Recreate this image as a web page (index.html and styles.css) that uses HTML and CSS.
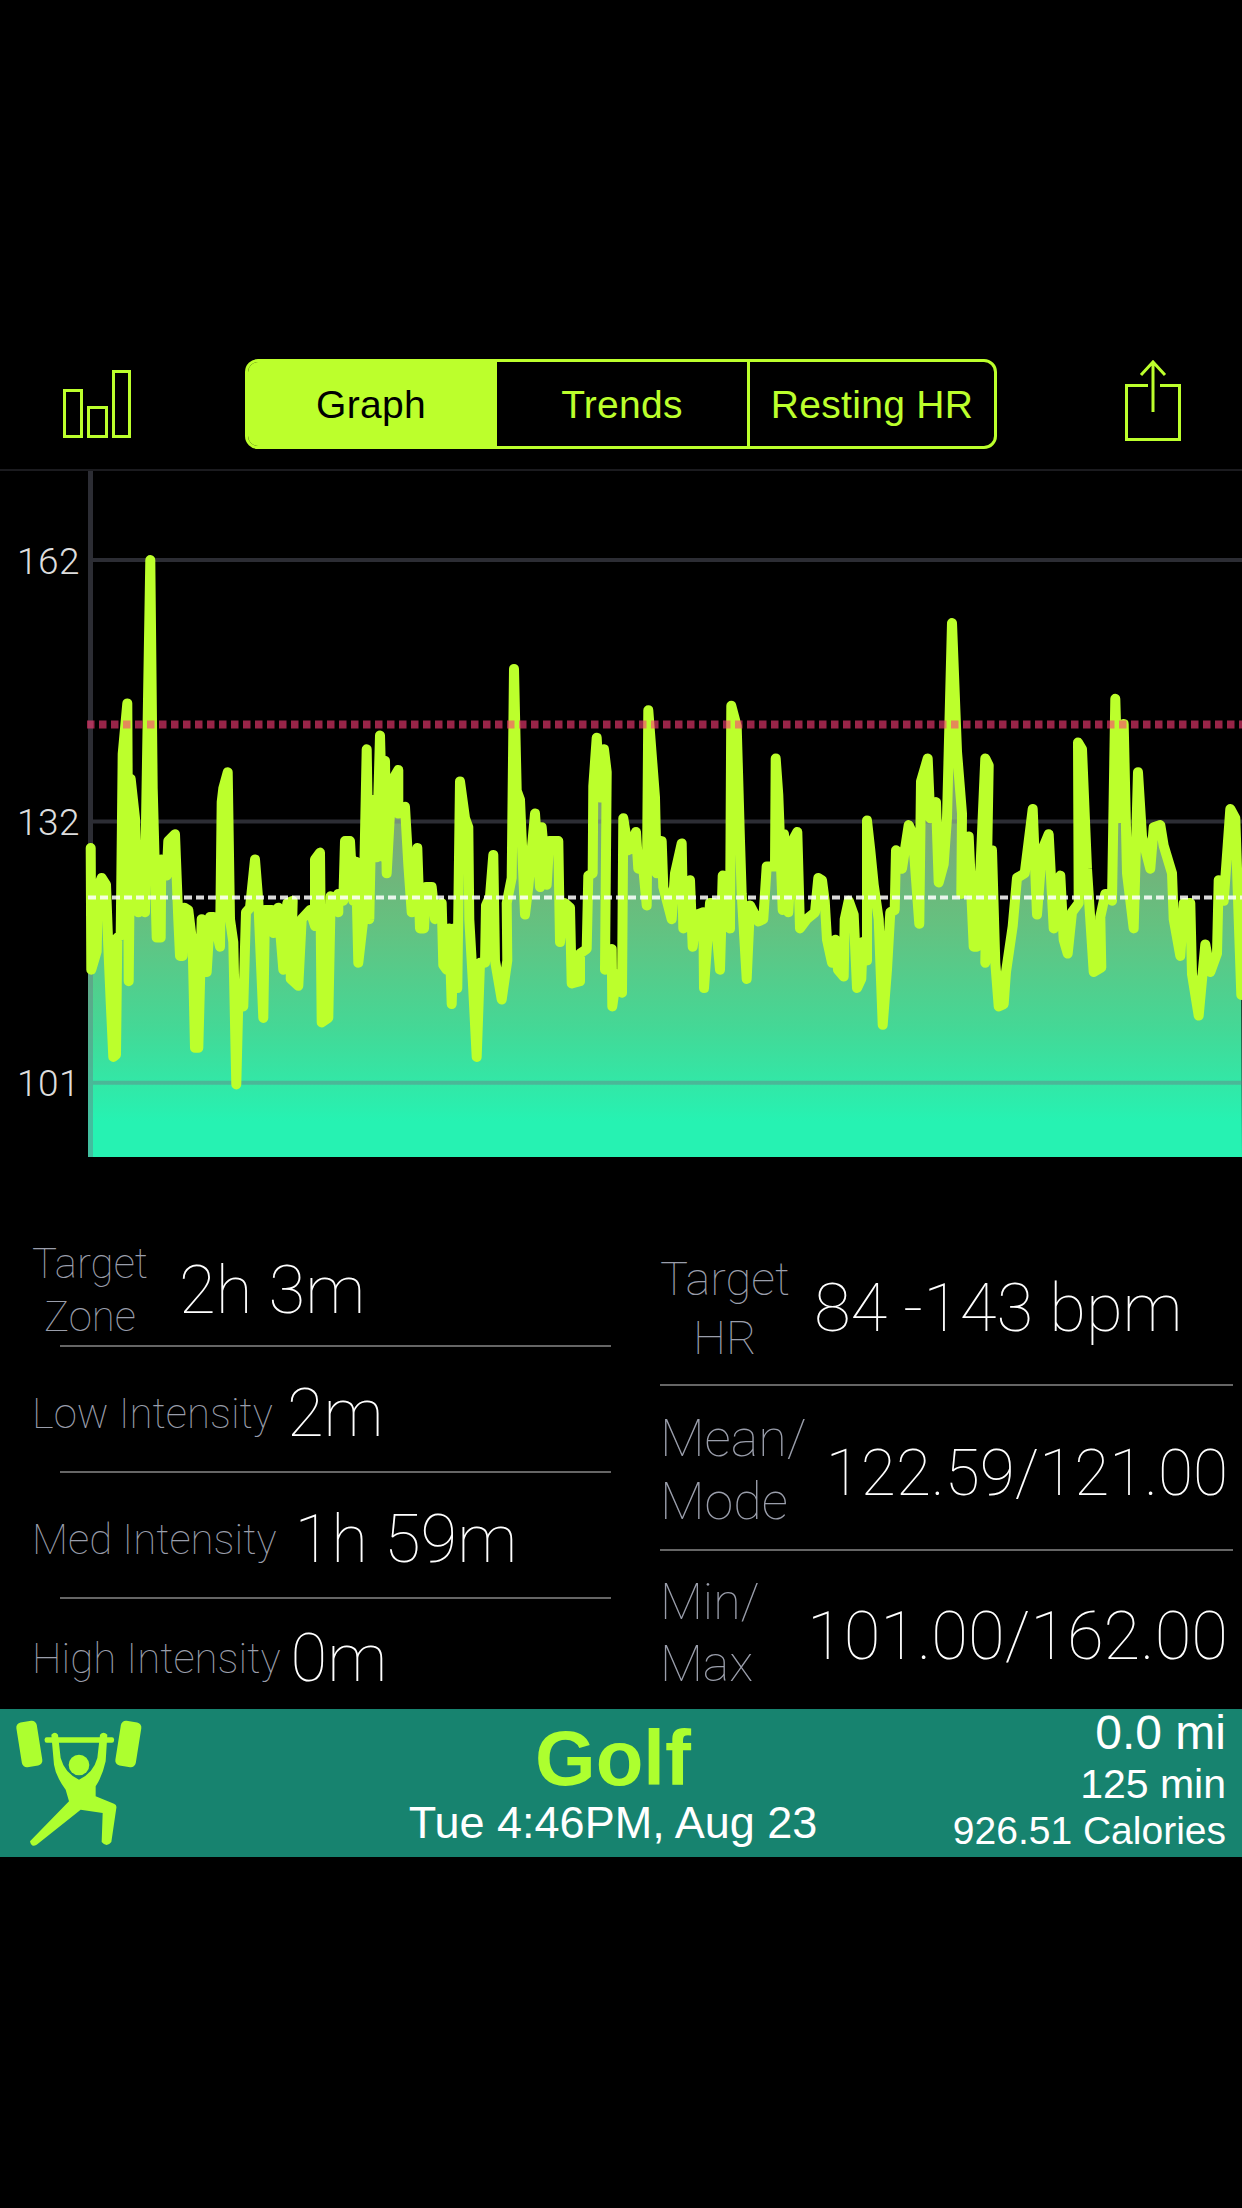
FILE: index.html
```html
<!DOCTYPE html>
<html lang="en">
  <head>
    <meta charset="UTF-8" />
    <meta name="viewport" content="width=device-width, initial-scale=1.0" />
    <title>Workout Detail</title>
    <link rel="stylesheet" href="styles.css">
  </head>
  <body>
    <nav class="topbar">
      <svg class="nav-icon" viewBox="0 0 70 90">
        <rect x="3.5" y="31.5" width="17" height="46"></rect>
        <rect x="27.5" y="48.5" width="18" height="29"></rect>
        <rect x="52.5" y="12.5" width="16" height="65"></rect>
      </svg>
      <div class="tabs">
        <div class="tab active">Graph</div>
        <div class="tab">Trends</div>
        <div class="tab">Resting HR</div>
      </div>
      <svg class="nav-icon" viewBox="0 0 70 90">
        <path d="M37 26.5H15.5V80.5H68.5V26.5H49"></path>
        <path d="M42 3V53M30 16L42 3L54 16"></path>
      </svg>
    </nav>

    <div class="chart">
      <svg class="chart-svg" width="1242" height="686" viewBox="0 0 1242 686">
        <defs>
          <linearGradient id="areaFade" gradientUnits="userSpaceOnUse" x1="0" y1="340" x2="0" y2="650">
            <stop offset="0" stop-color="#7fa574"></stop>
            <stop offset="0.35" stop-color="#66c07f"></stop>
            <stop offset="0.7" stop-color="#44d896"></stop>
            <stop offset="1" stop-color="#26f2b2"></stop>
          </linearGradient>
        </defs>
        <polygon id="hrArea" class="hr-area"></polygon>
        <line class="grid" x1="93" y1="89" x2="1242" y2="89"></line>
        <line class="grid" x1="93" y1="350.5" x2="1242" y2="350.5"></line>
        <line class="grid" x1="93" y1="611.7" x2="1242" y2="611.7"></line>
        <line class="grid axis" x1="90.5" y1="0" x2="90.5" y2="686"></line>
        <polyline id="hrLine" class="hr-line"></polyline>
        <line class="max-line" x1="87" y1="253.5" x2="1242" y2="253.5"></line>
        <line class="mean-line" x1="88" y1="426.6" x2="1242" y2="426.6"></line>
      </svg>
      <span class="ylabel y-top">162</span>
      <span class="ylabel y-mid">132</span>
      <span class="ylabel y-low">101</span>
    </div>

    <div class="stats">
      <div class="stats-left">
        <div class="row row-first">
          <div class="label center">Target<br>Zone</div>
          <div class="value">2h 3m</div>
        </div>
        <hr class="rule">
        <div class="row row-drop row-low">
          <div class="label">Low Intensity</div>
          <div class="value">2m</div>
        </div>
        <hr class="rule">
        <div class="row row-drop">
          <div class="label">Med Intensity</div>
          <div class="value">1h 59m</div>
        </div>
        <hr class="rule">
        <div class="row row-last row-drop row-high">
          <div class="label">High Intensity</div>
          <div class="value">0m</div>
        </div>
      </div>
      <div class="stats-right">
        <div class="row row-target">
          <div class="label target">Target<br>HR</div>
          <div class="value">84 -143 bpm</div>
        </div>
        <hr class="rule">
        <div class="row row-mean">
          <div class="label mean">Mean/<br>Mode</div>
          <div class="value push narrow">122.59/121.00</div>
        </div>
        <hr class="rule">
        <div class="row row-last row-minmax">
          <div class="label minmax">Min/<br>Max</div>
          <div class="value push">101.00/162.00</div>
        </div>
      </div>
    </div>

    <footer class="summary">
      <svg class="sport-icon" viewBox="40 50 390 390">
        <rect x="55" y="60" width="62" height="136" rx="15" transform="rotate(-9 86 128)"></rect>
        <rect x="352" y="60" width="62" height="136" rx="15" transform="rotate(9 383 128)"></rect>
        <rect x="132" y="108" width="208" height="16" rx="6"></rect>
        <circle cx="235" cy="191" r="31"></circle>
        <path d="M152 100Q163 88 172 100L180 170Q192 215 235 235Q278 215 290 170L298 100Q308 88 320 100L315 180Q305 225 285 255L285 285L340 307Q349 311 347 320L332 422Q318 440 303 422L306 335L240 325L108 430Q92 440 88 420L205 300L195 265Q165 225 160 190Z"></path>
      </svg>
      <div class="summary-mid">
        <div class="sport">Golf</div>
        <div class="when">Tue 4:46PM, Aug 23</div>
      </div>
      <div class="summary-right">
        <div class="dist">0.0 mi</div>
        <div class="mins">125 min</div>
        <div class="cals">926.51 Calories</div>
      </div>
    </footer>

    <script src="chart.js"></script>
  </body>
</html>
```

FILE: styles.css
```css
*{
    margin: 0;
    padding: 0;
    box-sizing: border-box;
}
html, body{
    background-color: black;
}
body{
    width: 1242px;
    height: 2208px;
    padding-top: 338px;
    overflow: hidden;
    font-family: 'Liberation Sans', Arial, sans-serif;
}

/* top bar */
.topbar{
    display: flex;
    justify-content: space-between;
    align-items: center;
    height: 133px;
    padding: 0 61px;
    border-bottom: 2px solid #1b1b1f;
}
.nav-icon{
    width: 70px;
    height: 90px;
    fill: none;
    stroke: #bcff2c;
    stroke-width: 3;
}
.tabs{
    display: flex;
    width: 752px;
    height: 90px;
    border: 3px solid #bcff2c;
    border-radius: 13px;
    overflow: hidden;
}
.tab{
    flex: none;
    width: 253px;
    display: flex;
    justify-content: center;
    align-items: center;
    padding-top: 3px;
    color: #bcff2c;
    font-size: 39px;
    letter-spacing: 0.3px;
    border-left: 3px solid #bcff2c;
}
.tab:last-child{
    flex: 1;
}
.tab.active{
    width: 246px;
    background-color: #bcff2c;
    color: black;
    border-left: none;
}

/* heart rate chart */
.chart{
    position: relative;
    height: 686px;
}
.chart-svg{
    display: block;
}
.hr-area{
    fill: url(#areaFade);
}
.hr-line{
    fill: none;
    stroke: #bcff2c;
    stroke-width: 10;
    stroke-linejoin: round;
    stroke-linecap: round;
}
.grid{
    stroke: rgba(110, 112, 130, 0.4);
    stroke-width: 4;
}
.axis{
    stroke-width: 5;
}
.max-line{
    stroke: rgba(255, 60, 120, 0.6);
    stroke-width: 8;
    stroke-dasharray: 7.5 4.5;
}
.mean-line{
    stroke: rgba(255, 255, 255, 0.85);
    stroke-width: 4;
    stroke-dasharray: 8 4;
}
.ylabel{
    position: absolute;
    left: 17px;
    color: #dddddd;
    font-family: Roboto, sans-serif;
    font-weight: 300;
    font-size: 37px;
    letter-spacing: 0.5px;
    line-height: 40px;
}
.y-top{ top: 71px; }
.y-mid{ top: 332px; }
.y-low{ top: 593px; }

/* stats */
.stats{
    display: flex;
    height: 552px;
    padding-top: 75px;
    font-family: Roboto, sans-serif;
    font-weight: 100;
}
.stats-left{
    display: flex;
    flex-direction: column;
    width: 611px;
    padding-left: 32px;
}
.stats-right{
    display: flex;
    flex-direction: column;
    width: 573px;
    margin-left: 49px;
}
.row{
    display: flex;
    align-items: center;
    height: 124px;
    gap: 18px;
}
.row-first{
    height: 113px;
    gap: 31px;
    padding-top: 3px;
}
.row-drop{
    padding-top: 8px;
}
.row-low{
    gap: 14px;
}
.row-high{
    gap: 10px;
}
.row-target{
    height: 152px;
    gap: 24px;
}
.row-mean{
    height: 163px;
    gap: 10px;
    padding-top: 4px;
}
.row-minmax{
    padding-top: 6px;
}
.row-last{
    flex: 1;
}
.rule{
    flex: none;
    height: 2px;
    border: none;
    background-color: #666666;
    margin-left: 28px;
}
.stats-right .rule{
    margin-left: 0;
}
.label{
    color: #9a9eab;
    font-size: 42px;
    line-height: 53px;
    white-space: nowrap;
}
.label.target{
    font-size: 47px;
    line-height: 59px;
}
.label.mean{
    font-size: 52px;
    line-height: 63px;
}
.label.minmax{
    font-size: 50px;
    line-height: 62px;
}
.center, .target{
    text-align: center;
}
.value{
    color: white;
    font-size: 67px;
    white-space: nowrap;
}
.value.narrow{
    font-size: 64px;
    margin-top: 7px;
}
.push{
    margin-left: auto;
    margin-right: 5px;
    margin-top: 5px;
}

/* bottom summary */
.summary{
    display: grid;
    grid-template-columns: 1fr auto 1fr;
    height: 148px;
    background-color: #17836f;
}
.sport-icon{
    width: 130px;
    height: 130px;
    margin: 9px 0 0 14px;
    fill: #adff2f;
}
.summary-mid{
    text-align: center;
    padding-right: 16px;
}
.sport{
    color: #adff2f;
    font-size: 78px;
    font-weight: 700;
    line-height: 78px;
    margin-top: 10px;
}
.when{
    color: white;
    font-size: 45px;
    line-height: 52px;
}
.summary-right{
    color: white;
    text-align: right;
    padding-right: 16px;
}
.dist{
    font-size: 48px;
    line-height: 48px;
}
.mins{
    font-size: 41px;
    line-height: 50px;
    margin-top: 2px;
}
.cals{
    font-size: 39px;
    line-height: 44px;
}
```

FILE: chart.js
```js
// traced samples, each run has its own x offset
const runs = [
  { dx: 0, pts: [272,845, 274,1110, 290,1070, 294,930, 305,910, 318,925, 325,1060, 332,1180, 340,1300, 348,1295, 352,1040, 362,1035, 368,640, 382,530, 386,1135, 392,695, 405,780, 415,985, 422,920, 435,985, 438,790, 451,218, 458,715, 470,1040, 482,1040, 484,870, 500,905, 505,830, 525,815, 535,1000, 540,1080, 548,1080, 553,975, 565,980, 578,1060, 585,1280, 595,1280, 605,1000, 620,1115, 630,995, 640,995, 660,1060, 665,745, 670,715, 683,680, 690,1000, 700,1050, 709,1360, 715,1180, 730,1190, 738,985, 750,975, 765,870, 775,960, 790,1215, 795,980, 815,980, 820,1030, 835,975, 850,1110, 862,965, 878,960, 872,1130, 895,1145, 905,1000, 930,980, 945,1015, 945,870, 960,855, 965,1225, 985,1215, 992,950, 1015,985, 1015,945, 1030,960, 1035,830, 1050,830, 1060,960, 1068,875, 1075,1095, 1090,1000, 1100,630, 1108,1000, 1115,740, 1130,865, 1140,600, 1150,865, 1155,655, 1160,900, 1175,700, 1195,675, 1195,770, 1215,755, 1225,880, 1235,985] },
  { dx: 1230, pts: [12,960, 22,845, 30,1020, 42,1020, 48,930, 65,930, 75,1000, 95,965, 100,1100, 110,1110, 118,1020, 125,1185, 132,1020, 142,1150, 150,700, 165,780, 175,800, 178,1000, 188,1130, 200,1300, 210,1095, 225,1095, 228,970, 240,950, 250,860, 255,1090, 275,1175, 292,1090, 290,965, 305,910, 312,455, 320,720, 330,740, 345,990, 355,930, 375,770, 390,930, 395,800, 410,925, 418,830, 445,830, 450,1050, 465,965, 480,975, 485,1140, 510,1135, 510,1075, 530,1065, 535,905, 548,900, 550,710, 560,605, 570,735, 582,630, 590,680, 585,1110, 605,1065, 607,1190, 620,1120, 636,1160, 640,780, 655,850, 678,810, 685,890, 700,890, 710,970, 715,545, 735,735, 740,900, 755,830, 760,930, 785,1000, 795,900, 815,835, 820,1020, 840,915, 848,1060, 860,990, 880,985, 882,1150, 900,965, 912,965, 930,1110, 938,905, 960,1020, 964,535, 980,580, 990,830, 995,945, 1010,1130, 1020,970, 1045,1005, 1060,1000, 1070,885, 1095,885, 1097,650, 1105,730, 1118,980, 1122,815, 1135,985, 1147,830, 1162,810, 1170,1020, 1190,1000, 1215,985, 1225,910] },
  { dx: 2466, pts: [0,915, 8,960, 15,1045, 30,1095, 40,1045, 48,1110, 65,1125, 68,1000, 80,960, 95,990, 105,1150, 118,1130, 122,1050, 135,1090, 135,785, 145,850, 155,925, 170,1000, 182,1230, 195,1110, 205,985, 218,980, 222,850, 240,890, 260,795, 272,815, 292,1010, 297,700, 317,650, 325,780, 342,745, 350,920, 365,880, 375,780, 390,355, 405,635, 420,770, 418,945, 440,820, 455,1060, 465,1060, 490,650, 500,665, 490,1095, 510,850, 520,1095, 530,1190, 545,1185, 552,1115, 572,1015, 585,910, 608,900, 632,760, 645,990, 660,850, 680,815, 695,1020, 715,905, 725,1045, 737,1075, 750,985, 770,965, 768,615, 780,630, 795,890, 815,1115, 838,1105, 835,995, 850,945, 870,960, 880,520, 890,780, 905,575, 915,900, 935,1020, 948,680, 960,820, 985,890, 995,800, 1015,795, 1025,840, 1050,900, 1055,1000, 1075,1080, 1085,965, 1105,965, 1110,1120, 1130,1210, 1150,1055, 1165,1115, 1185,1075, 1190,915, 1205,960, 1225,760, 1240,780, 1250,1000, 1258,1165] }
];

let line = [];
runs.forEach(run => {
  for (let i = 0; i < run.pts.length; i += 2) {
    const x = (run.pts[i] + run.dx) / 3;
    const y = run.pts[i + 1] * 720 / 1568 - 11;
    line.push(x.toFixed(1) + ',' + y.toFixed(1));
  }
});

document.getElementById('hrLine').setAttribute('points', line.join(' '));
document.getElementById('hrArea').setAttribute('points', '88,686 88,' + line[0].split(',')[1] + ' ' + line.join(' ') + ' 1242,686');
```
